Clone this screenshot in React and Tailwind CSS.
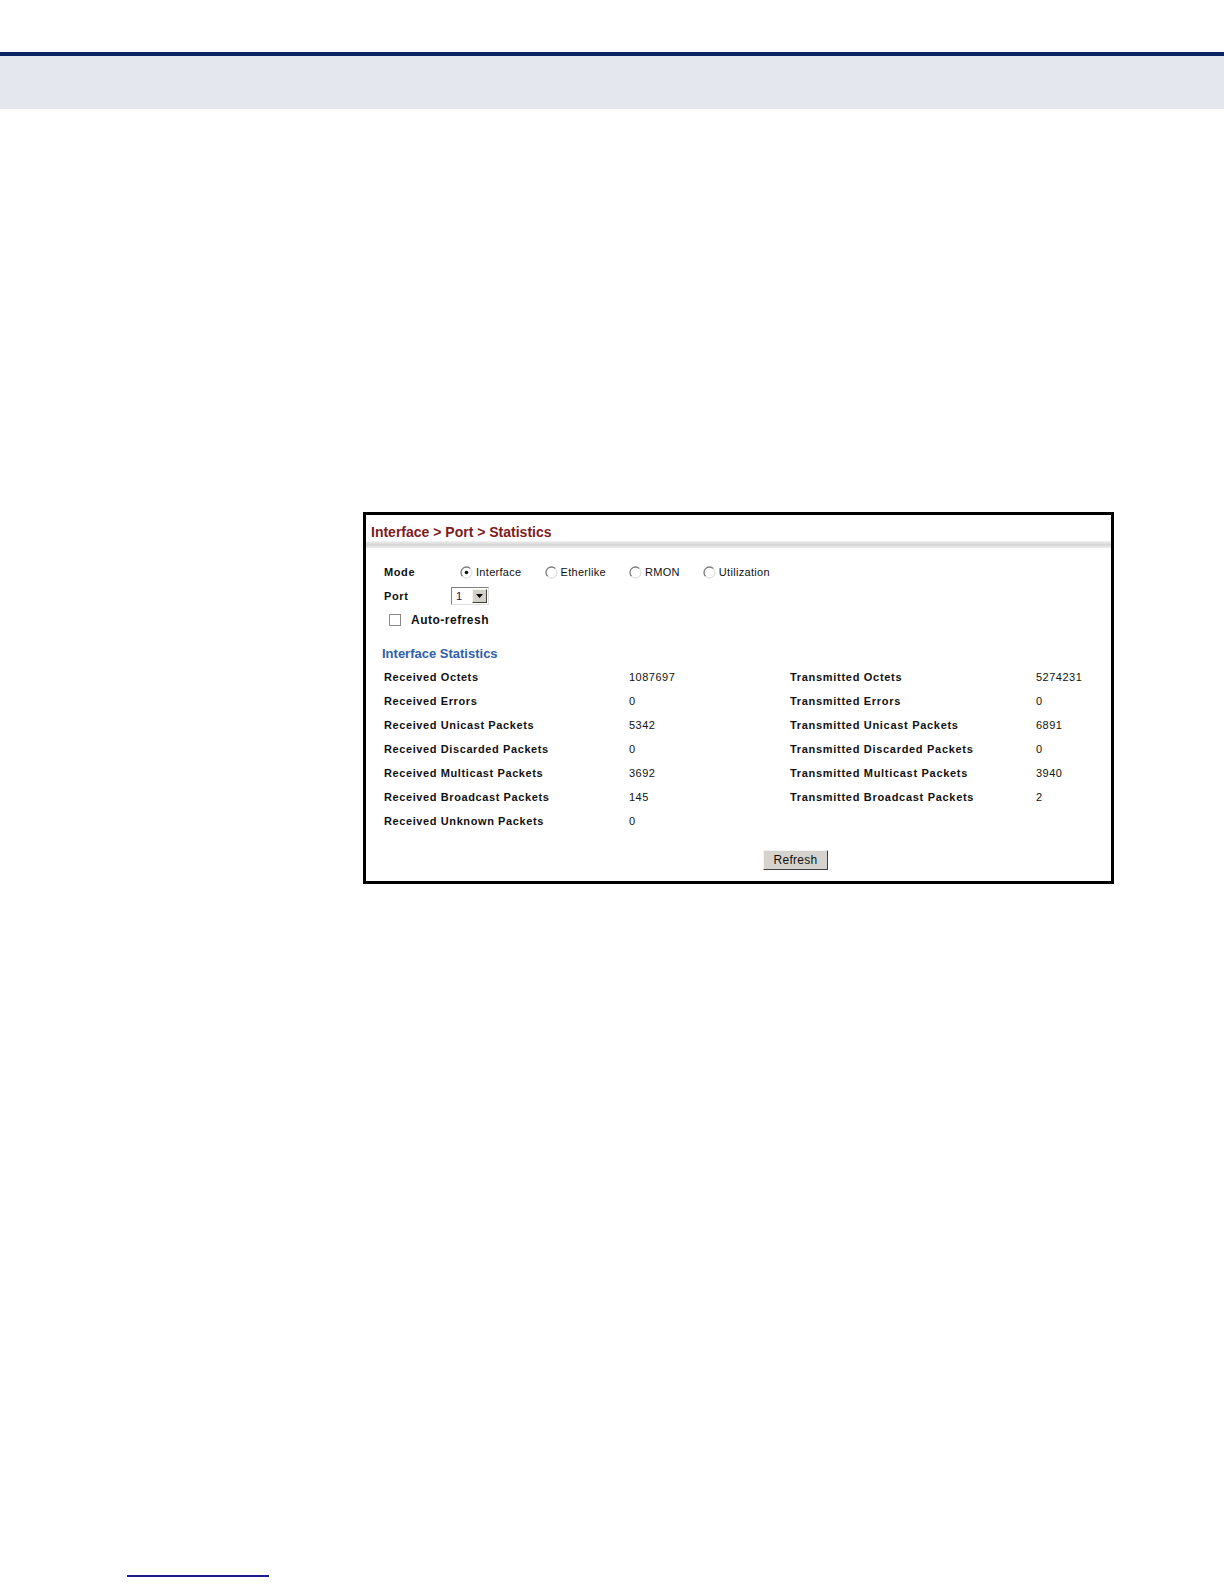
const FONT = { fontFamily: '"Liberation Sans", Arial, sans-serif' };

const left = [
  ["Received Octets", "1087697"],
  ["Received Errors", "0"],
  ["Received Unicast Packets", "5342"],
  ["Received Discarded Packets", "0"],
  ["Received Multicast Packets", "3692"],
  ["Received Broadcast Packets", "145"],
  ["Received Unknown Packets", "0"],
];

const right = [
  ["Transmitted Octets", "5274231"],
  ["Transmitted Errors", "0"],
  ["Transmitted Unicast Packets", "6891"],
  ["Transmitted Discarded Packets", "0"],
  ["Transmitted Multicast Packets", "3940"],
  ["Transmitted Broadcast Packets", "2"],
  null,
];

function Radio({ checked }) {
  return (
    <svg width="13" height="13" viewBox="0 0 13 13" className="shrink-0">
      <circle cx="6.5" cy="6.5" r="5.5" fill="#fff" />
      <path d="M2.6 10.4 A5.5 5.5 0 0 1 10.4 2.6" fill="none" stroke="#7a7a7a" strokeWidth="1.3" />
      <path d="M10.4 2.6 A5.5 5.5 0 0 1 2.6 10.4" fill="none" stroke="#e2e2e2" strokeWidth="1.3" />
      {checked && <circle cx="6.5" cy="6.5" r="1.8" fill="#111" />}
    </svg>
  );
}

function Option({ label, checked }) {
  return (
    <div className="flex items-center gap-[3px]">
      <Radio checked={checked} />
      <span className="text-[11px] tracking-[0.3px] text-[#111]">{label}</span>
    </div>
  );
}

export default function App() {
  return (
    <div className="min-h-[1584px] bg-white" style={FONT}>
      <div className="h-[52px]" />
      <div className="h-[4px] bg-[#0b2463]" />
      <div className="h-[53px] bg-[#e4e7ee]" />

      <div className="pt-[403px] pl-[363px]">
        <div className="w-[751px] border-[3px] border-black bg-white">
          {/* Title */}
          <div className="pt-[9px] pl-[5px]">
            <h1 className="text-[14px] leading-[16px] font-bold text-[#7d1b1e]">
              Interface &gt; Port &gt; Statistics
            </h1>
          </div>
          <div className="mt-[1px] h-[7px] bg-gradient-to-b from-[#f2f2f2] via-[#d6d6d6] to-[#ededed]" />

          {/* Content */}
          <div className="pt-[12px] pl-[18px] pb-[10px]">
            <div className="flex items-center h-[24px]">
              <span className="w-[76px] text-[11px] font-bold tracking-[0.6px] text-[#111]">Mode</span>
              <div className="flex items-center gap-[23px]">
                <Option label="Interface" checked />
                <Option label="Etherlike" />
                <Option label="RMON" />
                <Option label="Utilization" />
              </div>
            </div>

            <div className="flex items-center h-[24px]">
              <span className="w-[67px] text-[11px] font-bold tracking-[0.6px] text-[#111]">Port</span>
              <div className="flex h-[18px] w-[38px] border border-t-[#808080] border-l-[#808080] border-b-[#e0e0e0] border-r-[#e0e0e0] bg-white">
                <span className="flex-1 pl-[4px] text-[11px] leading-[16px] text-[#2a0a4a]">1</span>
                <div className="m-[1px] w-[15px] flex items-center justify-center bg-[#d4d0c8] border border-t-[#f4f4f4] border-l-[#f4f4f4] border-b-[#404040] border-r-[#404040]">
                  <svg width="7" height="4" viewBox="0 0 7 4">
                    <path d="M0 0 H7 L3.5 4 Z" fill="#000" />
                  </svg>
                </div>
              </div>
            </div>

            <div className="flex items-center h-[24px] pl-[5px] gap-[10px]">
              <div className="w-[12px] h-[12px] border border-[#8a8a8a] bg-white" />
              <span className="text-[12px] font-bold tracking-[0.5px] text-[#111]">Auto-refresh</span>
            </div>

            <div className="mt-[10px] h-[23px] flex items-center -ml-[2px]">
              <h2 className="text-[13px] font-bold text-[#3160a9]">Interface Statistics</h2>
            </div>

            <div className="grid grid-cols-[245px_161px_246px_1fr]">
              {left.map(([l, v], i) => (
                <div key={l} className="contents">
                  <div className="h-[24px] flex items-center text-[11px] font-bold tracking-[0.6px] text-[#111]">{l}</div>
                  <div className="h-[24px] flex items-center text-[11px] tracking-[0.5px] text-[#111]">{v}</div>
                  <div className="h-[24px] flex items-center text-[11px] font-bold tracking-[0.7px] text-[#111]">
                    {right[i] ? right[i][0] : ""}
                  </div>
                  <div className="h-[24px] flex items-center text-[11px] tracking-[0.5px] text-[#111]">
                    {right[i] ? right[i][1] : ""}
                  </div>
                </div>
              ))}
            </div>

            <div className="mt-[14px] pl-[379px]">
              <button className="h-[20px] w-[65px] bg-[#d6d3ce] border border-t-[#f4f4f4] border-l-[#f4f4f4] border-b-[#404040] border-r-[#404040] text-[12px] text-[#111] tracking-[0.3px]">
                Refresh
              </button>
            </div>
          </div>
        </div>
      </div>

      <div className="pt-[691px] pl-[127px]">
        <div className="w-[142px] h-[2px] bg-[#1c1c8c]" />
      </div>
    </div>
  );
}
